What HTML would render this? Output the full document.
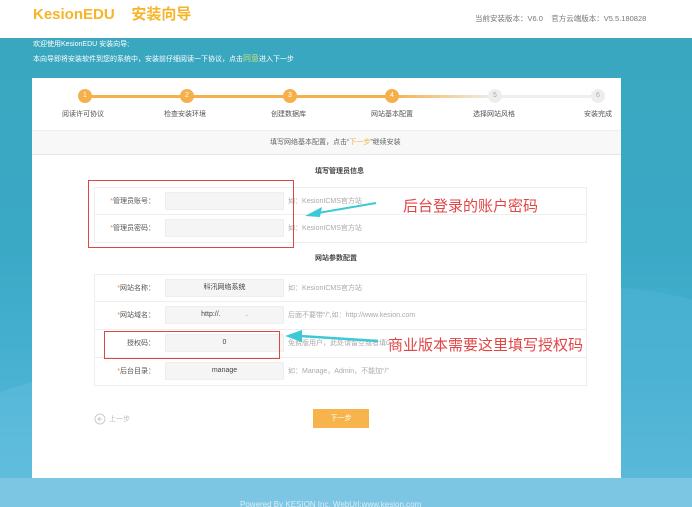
<!DOCTYPE html>
<html><head><meta charset="utf-8"><style>
*{margin:0;padding:0;box-sizing:border-box}
html,body{width:692px;height:507px;overflow:hidden}
body{position:relative;font-family:"Liberation Sans","Noto Sans CJK SC",sans-serif;background:#fff}
.abs{position:absolute}
.bg{left:0;top:38px;width:692px;height:469px;background:linear-gradient(180deg,#3aa7bf 0%,#3aa9c6 45%,#4bb2d4 75%,#6fc1e0 100%);overflow:hidden}
.foot{left:0;top:478px;width:692px;height:29px;background:#7cc6e4;overflow:hidden}
.card{left:32px;top:78px;width:589px;height:400px;background:#fff}
.t{font-size:7px;line-height:9px;color:#555;white-space:nowrap}
.c{width:14px;height:14px;border-radius:50%;color:#fff;font-size:7px;text-align:center;line-height:14px}
.row{left:94px;width:493px;height:28px;border:1px solid #eee;border-top:none}
.lab{font-size:7px;line-height:9px;color:#555;text-align:right;width:60px;left:0}
.inp{left:70px;width:119px;height:18px;background:#f5f5f5;border:1px solid #eee;font-size:7px;color:#444;text-align:center;line-height:16px;top:4px}
.tip{left:193px;font-size:7px;line-height:9px;color:#aaa;white-space:nowrap;top:9px}
.st{color:#f08a3c}
</style></head><body>
<div class="abs" style="left:33px;top:6px;font-size:15px;line-height:18px;font-weight:bold;color:#f6b529">KesionEDU&nbsp;&nbsp;&nbsp;&nbsp;安装向导</div>
<div class="abs t" style="left:475px;top:14px;color:#777;font-size:7.5px">当前安装版本：V6.0&nbsp;&nbsp;&nbsp;&nbsp;官方云端版本：V5.5.180828</div>
<div class="abs bg">
 <div class="abs" style="left:-80px;top:330px;width:460px;height:200px;border-radius:50%;background:#5fbcdc;opacity:.6"></div>
 <div class="abs" style="left:400px;top:250px;width:420px;height:300px;border-radius:50%;background:#4fb3d6;opacity:.5"></div>
</div>
<div class="abs foot"><div class="abs t" style="left:240px;top:22px;color:#d9eef7;font-size:8px">Powered By KESION Inc. WebUrl:www.kesion.com</div></div>
<div class="abs t" style="left:33px;top:40px;color:#fff">欢迎使用KesionEDU 安装向导;</div>
<div class="abs t" style="left:33px;top:54px;color:#fff">本向导即将安装软件到您的系统中，安装前仔细阅读一下协议，点击<span style="color:#c7e07a;font-size:8px">同意</span>进入下一步</div>
<div class="abs card"></div>
<div class="abs" style="left:85px;top:95px;width:307px;height:3px;background:#f5b04c"></div>
<div class="abs" style="left:392px;top:95px;width:206px;height:3px;background:linear-gradient(90deg,#f5b04c,#eee 50%)"></div>
<div class="abs c" style="left:78px;top:89px;background:#f5b04c">1</div>
<div class="abs c" style="left:180px;top:89px;background:#f5b04c">2</div>
<div class="abs c" style="left:283px;top:89px;background:#f5b04c">3</div>
<div class="abs c" style="left:385px;top:89px;background:#f5b04c">4</div>
<div class="abs c" style="left:488px;top:89px;background:#eee;color:#aaa">5</div>
<div class="abs c" style="left:591px;top:89px;background:#eee;color:#aaa">6</div>
<div class="abs t" style="left:62px;top:110px">阅读许可协议</div>
<div class="abs t" style="left:164px;top:110px">检查安装环境</div>
<div class="abs t" style="left:271px;top:110px">创建数据库</div>
<div class="abs t" style="left:371px;top:110px">网站基本配置</div>
<div class="abs t" style="left:473px;top:110px">选择网站风格</div>
<div class="abs t" style="left:584px;top:110px">安装完成</div>
<div class="abs" style="left:32px;top:130px;width:589px;height:25px;background:#f8f8f8;border-top:1px solid #eee;border-bottom:1px solid #e6e6e6"></div>
<div class="abs t" style="left:270px;top:138px;color:#666">填写网络基本配置，点击“<span style="color:#f5b04c">下一步</span>”继续安装</div>
<div class="abs t" style="left:315px;top:167px;font-weight:bold;color:#444">填写管理员信息</div>
<div class="abs row" style="top:187px;border-top:1px solid #eee">
 <div class="abs lab" style="top:9px"><span class="st">*</span>管理员账号：</div><div class="abs inp"></div><div class="abs tip">如：KesionICMS官方站</div></div>
<div class="abs row" style="top:215px">
 <div class="abs lab" style="top:9px"><span class="st">*</span>管理员密码：</div><div class="abs inp"></div><div class="abs tip">如：KesionICMS官方站</div></div>
<div class="abs" style="left:88px;top:180px;width:206px;height:68px;border:1.5px solid #e04545"></div>
<div class="abs t" style="left:315px;top:254px;font-weight:bold;color:#444">网站参数配置</div>
<div class="abs row" style="top:274px;border-top:1px solid #eee">
 <div class="abs lab" style="top:9px"><span class="st">*</span>网站名称：</div><div class="abs inp">科汛网络系统</div><div class="abs tip">如：KesionICMS官方站</div></div>
<div class="abs row" style="top:302px">
 <div class="abs lab" style="top:9px"><span class="st">*</span>网站域名：</div><div class="abs inp">http://. &nbsp;&nbsp;&nbsp;&nbsp;&nbsp;&nbsp;&nbsp;&nbsp;&nbsp;&nbsp;&nbsp; .</div><div class="abs tip">后面不要带“/”,如：http://www.kesion.com</div></div>
<div class="abs row" style="top:330px">
 <div class="abs lab" style="top:9px">授权码：</div><div class="abs inp">0</div><div class="abs tip">免费版用户，此处请留空或者填0</div></div>
<div class="abs row" style="top:358px">
 <div class="abs lab" style="top:9px"><span class="st">*</span>后台目录：</div><div class="abs inp">manage</div><div class="abs tip">如：Manage，Admin，不能加“/”</div></div>
<div class="abs" style="left:104px;top:331px;width:176px;height:28px;border:1.5px solid #e04545"></div>
<div class="abs" style="left:403px;top:197px;font-size:15px;line-height:20px;color:#e04545;white-space:nowrap">后台登录的账户密码</div>
<div class="abs" style="left:388px;top:336px;font-size:15px;line-height:20px;color:#e04545;white-space:nowrap">商业版本需要这里填写授权码</div>
<svg class="abs" style="left:0;top:0" width="692" height="507">
 <path d="M376 203 L318 213" stroke="#3cc9d6" stroke-width="2"/><path d="M305 216 L322 207 L320 217 Z" fill="#3cc9d6"/>
 <path d="M378 341 L300 336" stroke="#3cc9d6" stroke-width="2.5"/><path d="M285 336 L302 330 L302 342 Z" fill="#3cc9d6"/>
 <circle cx="100" cy="419" r="5" fill="none" stroke="#ccc"/><path d="M102 419h-4m2-2l-2 2 2 2" stroke="#ccc" fill="none"/>
</svg>
<div class="abs t" style="left:109px;top:415px;color:#bbb">上一步</div>
<div class="abs" style="left:313px;top:409px;width:56px;height:19px;background:#f7b44c;color:#fff;font-size:7px;text-align:center;line-height:19px">下一步</div>
</body></html>
